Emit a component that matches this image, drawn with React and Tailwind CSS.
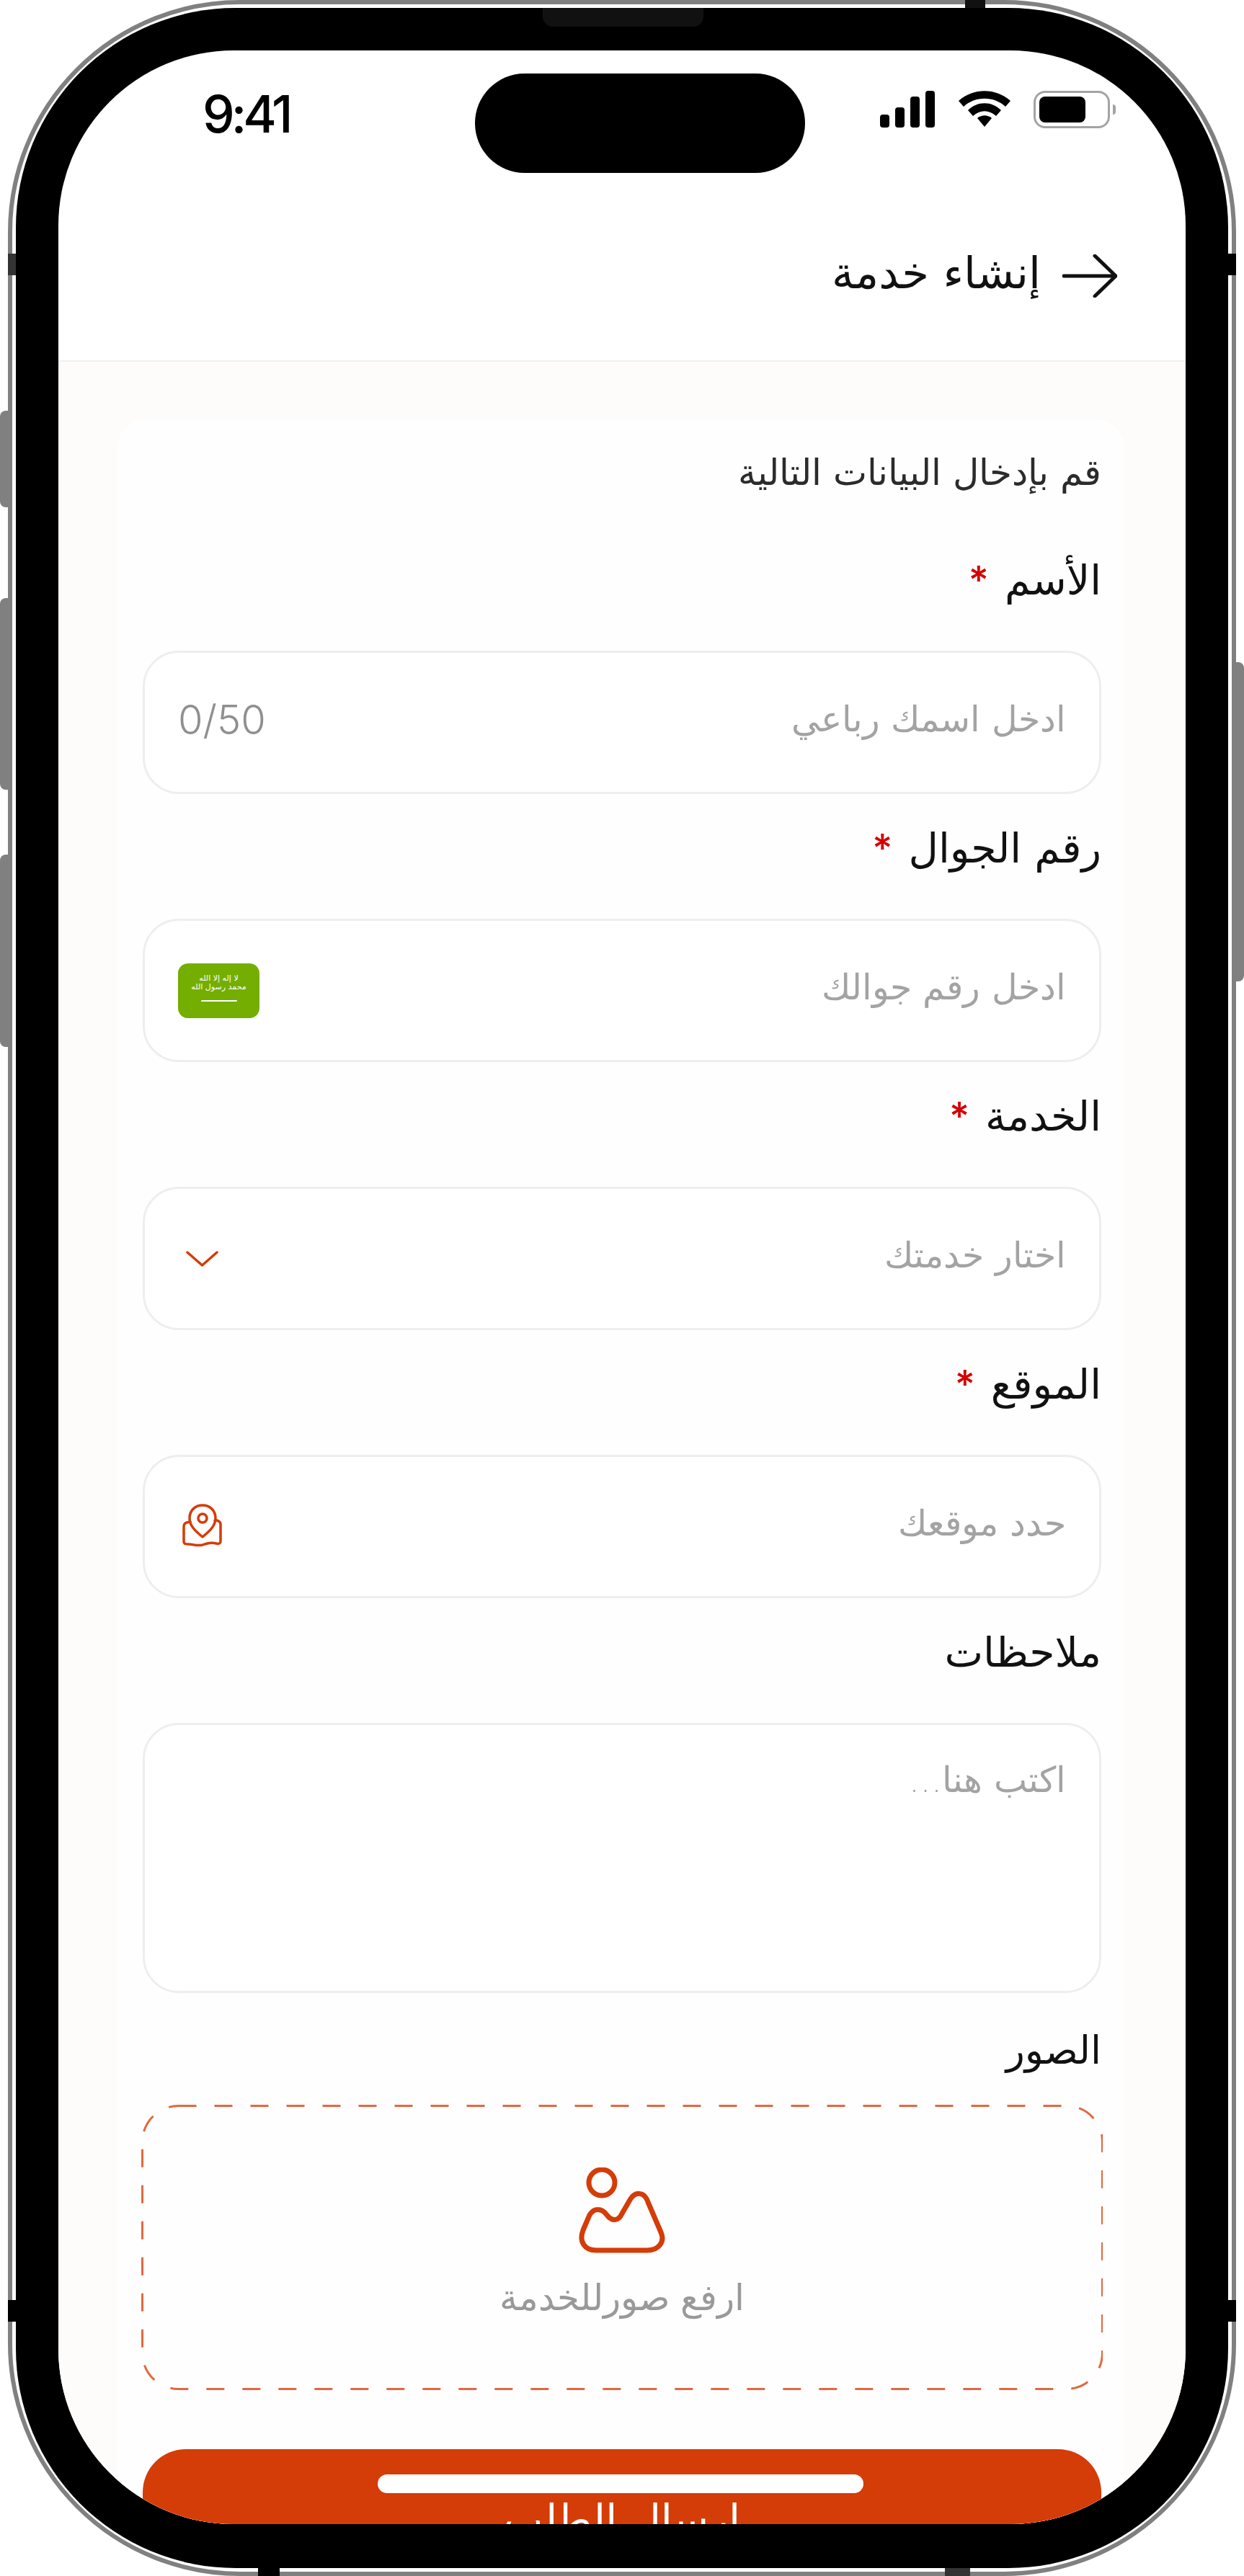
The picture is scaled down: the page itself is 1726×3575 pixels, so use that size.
const arabic = { fontFamily: '"DejaVu Sans", sans-serif' };

function StatusIcons() {
  return (
    <div className="flex items-start gap-[32px]" dir="ltr">
      <svg width="77" height="51" viewBox="0 0 77 51" fill="#000">
        <rect x="0" y="33" width="13" height="18" rx="4" />
        <rect x="21" y="23" width="13" height="28" rx="4" />
        <rect x="42" y="8" width="13" height="43" rx="4" />
        <rect x="63" y="0" width="13" height="51" rx="4" />
      </svg>
      <svg width="72" height="50" viewBox="0 0 72 50" fill="#000">
        <path d="M0 14 C20 -4.500 52 -4.500 72 14 L65 22 C49 7 23 7 7 22 Z" />
        <path d="M13 27 C26 14 46 14 59 27 L52 35 C42 26 30 26 20 35 Z" />
        <path d="M26 38 C32 33 40 33 46 38 L36 50 Z" />
      </svg>
      <div className="flex items-center gap-[4px]">
        <div className="w-[106px] h-[52px] rounded-[16px] border-[3px] border-[#a3a3a3] p-[5px]">
          <div className="w-[64px] h-full rounded-[8px] bg-black" />
        </div>
        <div className="w-[4px] h-[14px] rounded-r-[4px] bg-[#a3a3a3]" />
      </div>
    </div>
  );
}

function Label({ children, required }) {
  return (
    <div className="h-[80px] mb-[54px] flex items-center gap-[22px] text-[#111] text-[57px]" style={arabic}>
      <span className="pb-[6px]">{children}</span>
      {required && (
        <span className="text-[#d40000] text-[54px] font-medium leading-none h-[54px] -mt-[8px]" style={{ fontFamily: 'Inter, sans-serif' }}>*</span>
      )}
    </div>
  );
}

function Box({ children }) {
  return (
    <div className="h-[199px] mb-[39px] pr-[46px] pl-[46px] flex items-center justify-between rounded-[50px] border-[3px] border-[#eeeeee] bg-white">
      {children}
    </div>
  );
}

function Placeholder({ children }) {
  return (
    <span className="text-[#a3a3a3] text-[49px] font-light pb-[8px]" style={arabic}>{children}</span>
  );
}

function SaudiFlag() {
  return (
    <div className="w-[113px] h-[76px] rounded-[14px] bg-[#74ae00] flex flex-col items-center pt-[15px]">
      <span className="w-[80px] text-white text-[11px] leading-[12px] text-center" style={arabic}>لا إله إلا الله محمد رسول الله</span>
      <div className="w-[50px] h-[2px] mt-[12px] rounded-full bg-white" />
    </div>
  );
}

function ChevronIcon() {
  return (
    <svg width="45" height="24" viewBox="0 0 45 24" fill="none" stroke="#d43c08" strokeWidth="3.500" strokeLinecap="round" strokeLinejoin="round" className="ml-[11px]">
      <path d="M2 3 L22.500 21 L43 3" />
    </svg>
  );
}

function LocationIcon() {
  return (
    <svg width="60" height="62" viewBox="0 0 60 62" fill="none" stroke="#d43c08" strokeWidth="3.500" strokeLinecap="round" strokeLinejoin="round" className="ml-[3px] mb-[4px]">
      <path d="M31 47 C24 41 13 33 13 21 C13 10 21 3 31 3 C41 3 49 10 49 21 C49 33 38 41 31 47 Z" />
      <circle cx="31" cy="21" r="6" />
      <path d="M14 26 L9 27 C6 28 5 30 5 33 L5 54 C5 57 8 57 11 57 C19 57 23 60 31 58 C37 56 42 54 50 56 C53 57 56 56 56 53 L56 29 C56 26 54 25 51 24 L48 24" />
    </svg>
  );
}

function UploadIcon() {
  return (
    <svg width="120" height="120" viewBox="0 0 120 120" fill="none" stroke="#d43c08" strokeWidth="7" strokeLinejoin="round">
      <circle cx="32" cy="21" r="18" />
      <path d="M24 115 H95 C111 115 120 103 114 90 L96 48 C91 33 78 33 71 45 L60 64 C55 75 46 75 39 66 C32 56 21 56 15 66 L6 87 C0 103 8 115 24 115 Z" />
    </svg>
  );
}

export default function App() {
  return (
    <div className="relative w-[1726px] h-[3575px] bg-white overflow-hidden">
      {/* side buttons */}
      <div className="absolute left-0 top-[570px] w-[11px] h-[134px] rounded-l-[8px] bg-[#808080]" />
      <div className="absolute left-0 top-[830px] w-[11px] h-[266px] rounded-l-[8px] bg-[#808080]" />
      <div className="absolute left-0 top-[1186px] w-[11px] h-[267px] rounded-l-[8px] bg-[#808080]" />
      <div className="absolute right-0 top-[919px] w-[12px] h-[443px] rounded-r-[8px] bg-[#808080]" />

      {/* frame */}
      <div className="ml-[11px] w-[1704px] h-[3575px] rounded-[322px] border-[6px] border-[#808080] p-[5px]">
        <div className="relative h-full rounded-[305px] bg-black px-[59px] pt-[59px] pb-[61px]">
          <div className="absolute left-[731px] top-0 w-[223px] h-[26px] rounded-b-[14px] bg-[#111]" />

          <div dir="ltr" className="relative h-full rounded-[243px] overflow-hidden bg-white flex flex-col">
            {/* status bar */}
            <div className="flex items-start pl-[200px] pt-[32px]">
              <span className="w-[378px] mt-[20px] text-[71px] leading-[72px] font-medium tracking-[-5px] text-black" style={{ fontFamily: 'Inter, sans-serif' }}>9:41</span>
              <div className="w-[458px] h-[138px] rounded-[69px] bg-black" />
              <div className="ml-[104px] mt-[24px]">
                <StatusIcons />
              </div>
            </div>

            {/* header */}
            <div dir="rtl" className="h-[262px] pr-[95px] pt-[98px] border-b-2 border-[#f0f0f0] flex items-start gap-[30px]">
              <svg width="76" height="60" viewBox="0 0 76 60" fill="none" stroke="#111" strokeWidth="5" strokeLinecap="round" strokeLinejoin="round" className="mt-[15px]">
                <path d="M2 30 H74 M45 2 L74 30 L45 58" />
              </svg>
              <span className="text-[61px] leading-[90px] -mt-[4px] text-[#111]" style={arabic}>إنشاء خدمة</span>
            </div>

            {/* form */}
            <div dir="rtl" className="flex-1 min-h-0 overflow-hidden bg-[#fefcfb] pt-[80px] pl-[82px] pr-[85px]">
              <div className="h-full rounded-t-[40px] bg-[#fefefe] pt-[34px] pl-[35px] pr-[32px]">
                <p className="h-[80px] mb-[73px] flex items-center text-[50px] text-[#2b2b2b] font-light" style={arabic}>قم بإدخال البيانات التالية</p>

                <Label required>الأسم</Label>
                <Box>
                  <Placeholder>ادخل اسمك رباعي</Placeholder>
                  <span dir="ltr" className="text-[56px] font-light text-[#8f8f8f] pb-[8px]" style={{ fontFamily: 'Inter, sans-serif' }}>0/50</span>
                </Box>

                <Label required>رقم الجوال</Label>
                <Box>
                  <Placeholder>ادخل رقم جوالك</Placeholder>
                  <SaudiFlag />
                </Box>

                <Label required>الخدمة</Label>
                <Box>
                  <Placeholder>اختار خدمتك</Placeholder>
                  <ChevronIcon />
                </Box>

                <Label required>الموقع</Label>
                <Box>
                  <Placeholder>حدد موقعك</Placeholder>
                  <LocationIcon />
                </Box>

                <Label>ملاحظات</Label>
                <div className="h-[375px] mb-[39px] px-[46px] pt-[40px] rounded-[50px] border-[3px] border-[#eeeeee] bg-white">
                  <Placeholder>اكتب هنا...</Placeholder>
                </div>

                <div className="h-[80px] mb-[36px] flex items-center text-[#111] text-[54px]" style={arabic}>الصور</div>

                {/* upload box */}
                <div className="relative -mx-[2px] h-[396px] mb-[82px] flex flex-col items-center pt-[87px]">
                  <svg className="absolute inset-0 w-full h-full" fill="none">
                    <rect x="1.500" y="1.500" width="1332" height="393" rx="50" stroke="#e2683e" strokeWidth="3" strokeDasharray="25 25" />
                  </svg>
                  <UploadIcon />
                  <span className="mt-[24px] text-[#999] text-[50px] font-light" style={arabic}>ارفع صورللخدمة</span>
                </div>

                <button className="w-full h-[197px] rounded-[60px] bg-[#d43c08] text-white text-[58px]" style={arabic}>ارسال الطلب</button>
              </div>
            </div>

            {/* home indicator */}
            <div className="absolute left-[443px] bottom-[43px] w-[674px] h-[26px] rounded-full bg-white" />
          </div>
        </div>
      </div>

      {/* antenna bands */}
      <div className="absolute left-[11px] top-[352px] w-[11px] h-[30px] bg-[#333]" />
      <div className="absolute right-[11px] top-[352px] w-[11px] h-[30px] bg-black" />
      <div className="absolute left-[11px] top-[3192px] w-[11px] h-[30px] bg-black" />
      <div className="absolute right-[11px] top-[3192px] w-[11px] h-[30px] bg-black" />
      <div className="absolute left-[1339px] top-0 w-[28px] h-[11px] bg-[#111]" />
      <div className="absolute left-[358px] bottom-0 w-[30px] h-[11px] bg-black" />
      <div className="absolute left-[1311px] bottom-0 w-[35px] h-[11px] bg-[#333]" />
    </div>
  );
}
